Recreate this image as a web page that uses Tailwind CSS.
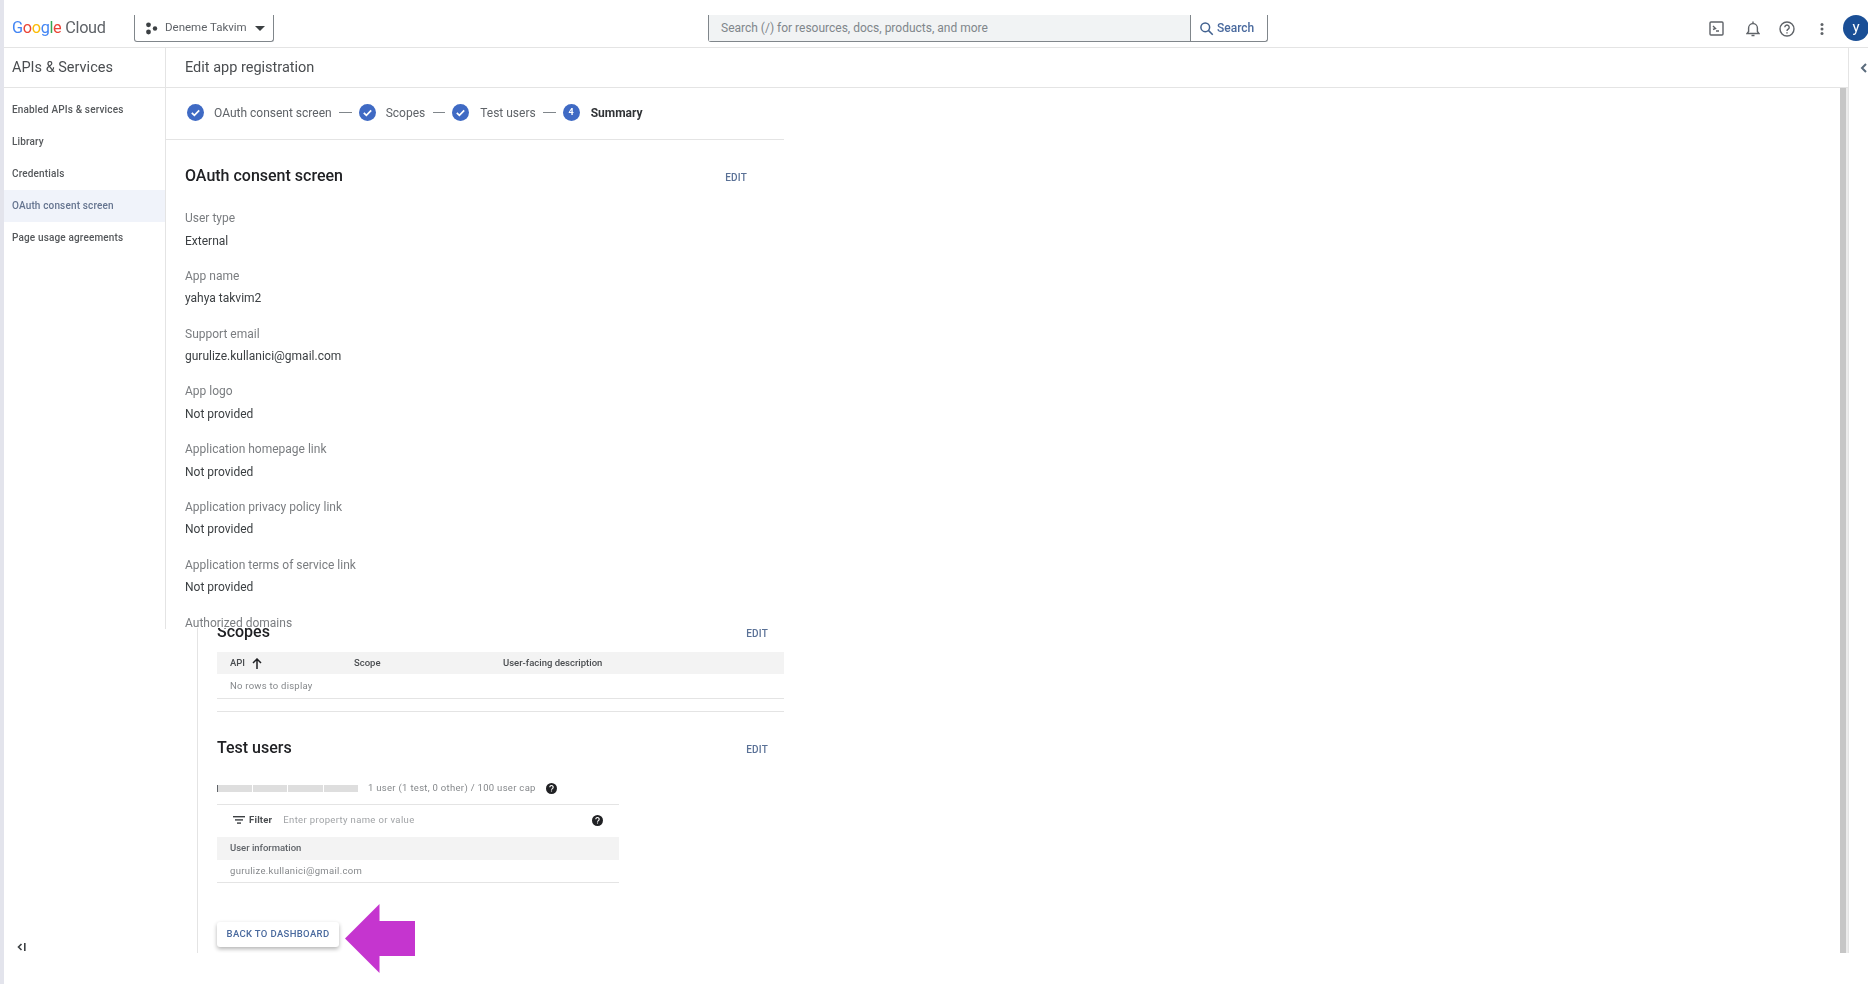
<!DOCTYPE html>
<html lang="en">
<head>
  <meta charset="utf-8">
  <title>Edit app registration - Google Cloud</title>
  <script src="https://cdn.jsdelivr.net/npm/@tailwindcss/browser@4"></script>
</head>
<body class="bg-white font-['Roboto',sans-serif] text-[#3c4043] overflow-hidden">
  <div class="relative w-[1868px] h-[984px] flex overflow-hidden blur-[0.5px]">
    <div class="w-[4px] bg-[#e3e4ec] shrink-0"></div>
    <div class="w-[1864px] flex flex-col">

      <!-- top bar -->
      <header class="h-[48px] shrink-0 border-b border-[#e4e4e4] pt-[15px] flex items-start overflow-hidden">
        <div class="w-[130px] shrink-0 h-[27px] flex items-center pl-[8px] text-[16.3px] tracking-[-0.35px] text-[#5f6368]">
          <span><span class="text-[#4285f4]">G</span><span class="text-[#ea4335]">o</span><span class="text-[#fbbc05]">o</span><span class="text-[#4285f4]">g</span><span class="text-[#34a853]">l</span><span class="text-[#ea4335]">e</span></span>
          <span class="ml-[4px]">Cloud</span>
        </div>
        <div class="w-[140px] shrink-0 h-[27px] border border-t-0 border-[#80868b] rounded-b-[3px] flex items-center pl-[10px] text-[11.5px] text-[#5f6368]">
          <svg width="13" height="13" viewBox="0 0 13 13" fill="#3c4043"><circle cx="3.5" cy="2.8" r="2.4"/><circle cx="3.5" cy="10" r="2.4"/><circle cx="10" cy="6.5" r="2.2"/></svg>
          <span class="ml-[7px]">Deneme Takvim</span>
          <svg class="ml-[8px]" width="10" height="5" viewBox="0 0 10 5" fill="#3c4043"><path d="M0 0h10L5 5z"/></svg>
        </div>
        <div class="ml-[434px] w-[560px] shrink-0 h-[27px] flex border border-t-0 border-[#80868b] rounded-b-[3px]">
          <div class="w-[482px] bg-[#f1f3f4] border-r border-[#80868b] flex items-center pl-[12px] text-[12px] text-[#80868b]">Search (/) for resources, docs, products, and more</div>
          <div class="flex-1 flex items-center pl-[8px] text-[12px] font-medium text-[#4a6a9e]">
            <svg width="15" height="15" viewBox="0 0 24 24" fill="none" stroke="#41618f" stroke-width="2.4"><circle cx="10" cy="10" r="7"/><path d="M15 15l7 7"/></svg>
            <span class="ml-[3px]">Search</span>
          </div>
        </div>
        <div class="ml-[441px] shrink-0 flex items-center h-[27px] text-[#5f6368]">
          <svg width="15" height="15" viewBox="0 0 15 15" fill="none" stroke="#5f6368" stroke-width="1.4"><rect x="1" y="1" width="13" height="13" rx="1"/><path d="M4 5l2.5 2.5L4 8.5M7 10h3"/></svg>
          <svg class="ml-[22px]" width="14" height="16" viewBox="0 0 14 16" fill="none" stroke="#5f6368" stroke-width="1.4"><path d="M1 12.5h12l-1.6-2V7a4.4 4.4 0 0 0-8.8 0v3.5z"/><path d="M7 .5v2M5.5 14.5h3"/></svg>
          <svg class="ml-[19px]" width="16" height="16" viewBox="0 0 16 16" fill="none" stroke="#5f6368" stroke-width="1.4"><circle cx="8" cy="8" r="7"/><path d="M5.8 6.2a2.2 2.2 0 1 1 3.4 1.9c-.8.5-1.2.9-1.2 1.9M8 11.2v1.2"/></svg>
          <svg class="ml-[25px]" width="4" height="12" viewBox="0 0 4 12" fill="#5f6368"><circle cx="2" cy="1.6" r="1.5"/><circle cx="2" cy="6" r="1.5"/><circle cx="2" cy="10.4" r="1.5"/></svg>
          <div class="ml-[19px] w-[26px] h-[26px] -mt-[2px] rounded-full bg-[#1a4f96] text-white text-[15px] flex items-center justify-center shrink-0">y</div>
        </div>
      </header>

      <div class="flex h-[905px] shrink-0">
        <!-- left nav -->
        <aside class="w-[162px] shrink-0 flex flex-col">
          <div class="h-[581px] border-r border-[#e4e4e4]">
            <div class="h-[40px] border-b border-[#e4e4e4] pl-[8px] flex items-center text-[14.5px] text-[#4a4d50]">APIs &amp; Services</div>
            <nav class="pt-[6px] text-[10px] tracking-[0.15px] font-medium text-[#55585b]">
              <div class="h-[32px] pb-[1px] pl-[8px] flex items-center">Enabled APIs &amp; services</div>
              <div class="h-[32px] pb-[1px] pl-[8px] flex items-center">Library</div>
              <div class="h-[32px] pb-[1px] pl-[8px] flex items-center">Credentials</div>
              <div class="h-[32px] pb-[1px] pl-[8px] flex items-center bg-[#f0f3fa] text-[#65748f]">OAuth consent screen</div>
              <div class="h-[32px] pb-[1px] pl-[8px] flex items-center">Page usage agreements</div>
            </nav>
          </div>
          <div class="mt-[314px] pl-[13px] flex items-center">
            <svg width="9" height="8" viewBox="0 0 9 8" fill="none" stroke="#3c4043" stroke-width="1.6"><path d="M4.5 1L1.5 4l3 3M7.8 0v8"/></svg>
          </div>
        </aside>

        <!-- content -->
        <main class="w-[1682px] shrink-0 flex flex-col">
          <div class="h-[40px] shrink-0 border-b border-[#e4e4e4] pl-[19px] flex items-center text-[14.5px] text-[#4a4d50]">Edit app registration</div>
          <div class="h-[865px] flex">
            <div class="w-[1674px] shrink-0 flex flex-col">

              <!-- summary, upper part -->
              <section class="h-[540px] shrink-0 overflow-hidden w-[618px]">
                <div class="h-[52px] pb-[2px] border-b border-[#e4e4e4] pl-[21px] flex items-center text-[12px] text-[#5f6368]">
                  <svg width="17" height="17" viewBox="0 0 17 17"><circle cx="8.5" cy="8.5" r="8.5" fill="#3f6ac4"/><path d="M4.8 8.8l2.6 2.6 4.8-5" fill="none" stroke="#fff" stroke-width="1.7"/></svg>
                  <span class="ml-[10px]">OAuth consent screen</span>
                  <span class="ml-[7px] w-[13px] h-px bg-[#80868b]"></span>
                  <svg class="ml-[7px]" width="17" height="17" viewBox="0 0 17 17"><circle cx="8.5" cy="8.5" r="8.5" fill="#3f6ac4"/><path d="M4.8 8.8l2.6 2.6 4.8-5" fill="none" stroke="#fff" stroke-width="1.7"/></svg>
                  <span class="ml-[10px]">Scopes</span>
                  <span class="ml-[8px] w-[12px] h-px bg-[#80868b]"></span>
                  <svg class="ml-[7px]" width="17" height="17" viewBox="0 0 17 17"><circle cx="8.5" cy="8.5" r="8.5" fill="#3f6ac4"/><path d="M4.8 8.8l2.6 2.6 4.8-5" fill="none" stroke="#fff" stroke-width="1.7"/></svg>
                  <span class="ml-[11px]">Test users</span>
                  <span class="ml-[7px] w-[13px] h-px bg-[#80868b]"></span>
                  <span class="ml-[7px] w-[17px] h-[17px] rounded-full bg-[#3f6ac4] text-white text-[9px] font-bold flex items-center justify-center">4</span>
                  <span class="ml-[11px] font-bold text-[#303336]">Summary</span>
                </div>
                <div class="pl-[19px] w-[581px]">
                  <div class="h-[58px] flex items-start justify-between pt-[25px]">
                    <h2 class="text-[16px] leading-[22px] font-medium text-[#202124]">OAuth consent screen</h2>
                    <span class="mt-[5px] text-[10px] font-medium tracking-[0.2px] text-[#5a7196]">EDIT</span>
                  </div>
                  <dl class="text-[12px] leading-[16px]">
                    <div class="h-[57.8px] pt-[12px]"><dt class="text-[#7a7d80]">User type</dt><dd class="mt-[6.5px] text-[#3c4043]">External</dd></div>
                    <div class="h-[57.8px] pt-[12px]"><dt class="text-[#7a7d80]">App name</dt><dd class="mt-[6.5px] text-[#3c4043]">yahya takvim2</dd></div>
                    <div class="h-[57.8px] pt-[12px]"><dt class="text-[#7a7d80]">Support email</dt><dd class="mt-[6.5px] text-[#3c4043]">gurulize.kullanici@gmail.com</dd></div>
                    <div class="h-[57.8px] pt-[12px]"><dt class="text-[#7a7d80]">App logo</dt><dd class="mt-[6.5px] text-[#3c4043]">Not provided</dd></div>
                    <div class="h-[57.8px] pt-[12px]"><dt class="text-[#7a7d80]">Application homepage link</dt><dd class="mt-[6.5px] text-[#3c4043]">Not provided</dd></div>
                    <div class="h-[57.8px] pt-[12px]"><dt class="text-[#7a7d80]">Application privacy policy link</dt><dd class="mt-[6.5px] text-[#3c4043]">Not provided</dd></div>
                    <div class="h-[57.8px] pt-[12px]"><dt class="text-[#7a7d80]">Application terms of service link</dt><dd class="mt-[6.5px] text-[#3c4043]">Not provided</dd></div>
                    <div class="pt-[12px]"><dt class="text-[#7a7d80]">Authorized domains</dt></div>
                  </dl>
                </div>
              </section>

              <!-- summary, lower part -->
              <section class="h-[325px] ml-[31px] w-[587px] border-l border-[#e4e4e4] overflow-hidden pl-[19px]">
                <div class="flex justify-between items-start h-[24px] -mt-[7px] pr-[16px]">
                  <h2 class="text-[16px] leading-[22px] font-medium text-[#202124]">Scopes</h2>
                  <span class="mt-[5px] text-[10px] font-medium tracking-[0.2px] text-[#5a7196]">EDIT</span>
                </div>
                <div class="grid grid-cols-[124px_149px_1fr] h-[22px] items-center bg-[#f3f3f3] pl-[13px] mt-[7px] text-[9.5px] font-medium text-[#4a4d50]">
                  <div class="flex items-center">API
                    <svg class="ml-[7px]" width="10" height="11" viewBox="0 0 10 11" fill="none" stroke="#202124" stroke-width="1.5"><path d="M5 11V1M1 5l4-4 4 4"/></svg>
                  </div>
                  <div>Scope</div>
                  <div>User-facing description</div>
                </div>
                <div class="h-[25px] border-b border-[#e4e4e4] pl-[13px] flex items-center text-[9.5px] tracking-[0.25px] text-[#85888b]">No rows to display</div>
                <div class="h-[13px] border-b border-[#e4e4e4]"></div>

                <div class="flex justify-between items-start pt-[25px] h-[65px] pr-[16px]">
                  <h2 class="text-[16px] leading-[22px] font-medium text-[#202124]">Test users</h2>
                  <span class="mt-[5px] text-[10px] font-medium tracking-[0.2px] text-[#5a7196]">EDIT</span>
                </div>
                <div class="w-[402px]">
                  <div class="h-[27px] pb-[4px] flex items-center">
                    <div class="w-[141px] h-[7px] grid grid-cols-4 gap-[1px] bg-white">
                      <div class="bg-[#dedede] border-l border-[#5f6368]"></div><div class="bg-[#dedede]"></div><div class="bg-[#dedede]"></div><div class="bg-[#dedede]"></div>
                    </div>
                    <span class="ml-[10px] text-[9.5px] tracking-[0.3px] text-[#85888b]">1 user (1 test, 0 other) / 100 user cap</span>
                    <svg class="ml-[10px]" width="11" height="11" viewBox="0 0 11 11"><circle cx="5.5" cy="5.5" r="5.5" fill="#202124"/><path d="M3.8 4.2a1.7 1.7 0 1 1 2.6 1.4c-.6.4-.9.6-.9 1.2M5.5 7.6v1" fill="none" stroke="#fff" stroke-width="1.1"/></svg>
                  </div>
                  <div class="h-[33px] pb-[2px] border-t border-[#e4e4e4] flex items-center pl-[16px] pr-[16px]">
                    <svg width="12" height="8" viewBox="0 0 12 8" fill="#3c4043"><rect width="12" height="1.4"/><rect x="2" y="3.2" width="8" height="1.4"/><rect x="4" y="6.4" width="4" height="1.4"/></svg>
                    <span class="ml-[4px] text-[9.5px] font-bold tracking-[0.2px] text-[#4a4d50]">Filter</span>
                    <span class="ml-[11px] text-[9.5px] tracking-[0.35px] text-[#a0a3a6]">Enter property name or value</span>
                    <svg class="ml-auto" width="11" height="11" viewBox="0 0 11 11"><circle cx="5.5" cy="5.5" r="5.5" fill="#202124"/><path d="M3.8 4.2a1.7 1.7 0 1 1 2.6 1.4c-.6.4-.9.6-.9 1.2M5.5 7.6v1" fill="none" stroke="#fff" stroke-width="1.1"/></svg>
                  </div>
                  <div class="h-[23px] bg-[#f3f3f3] pl-[13px] flex items-center text-[9.5px] font-medium text-[#5f6368]">User information</div>
                  <div class="h-[23px] border-b border-[#e4e4e4] pl-[13px] flex items-center text-[9.5px] tracking-[0.3px] text-[#85888b]">gurulize.kullanici@gmail.com</div>
                </div>
                <button class="mt-[39px] w-[122px] h-[25px] rounded-[3px] shadow-[0_2px_4px_rgba(0,0,0,0.3)] bg-white text-[9.5px] font-medium tracking-[0.35px] text-[#4a6a9e]">BACK TO DASHBOARD</button>
              </section>
            </div>
            <!-- page scrollbar -->
            <div class="w-[8px] shrink-0 bg-[#c6c6c6] border-r-2 border-[#ececec]"></div>
          </div>
        </main>

        <!-- collapsed right rail -->
        <div class="w-[20px] shrink-0 border-l border-[#e4e4e4] pl-[11px] pt-[15px]">
          <svg width="7" height="10" viewBox="0 0 7 10" fill="none" stroke="#5a6b7c" stroke-width="2"><path d="M6 1L2 5l4 4"/></svg>
        </div>
      </div>
    </div>

    <!-- annotation arrow over the screenshot -->
    <svg class="absolute left-[345px] top-[904px]" width="70" height="69" viewBox="0 0 70 69" fill="#c535cf"><path d="M0 34.5L34.5 0v17H70v35H34.5v17z"/></svg>
  </div>
</body>
</html>
